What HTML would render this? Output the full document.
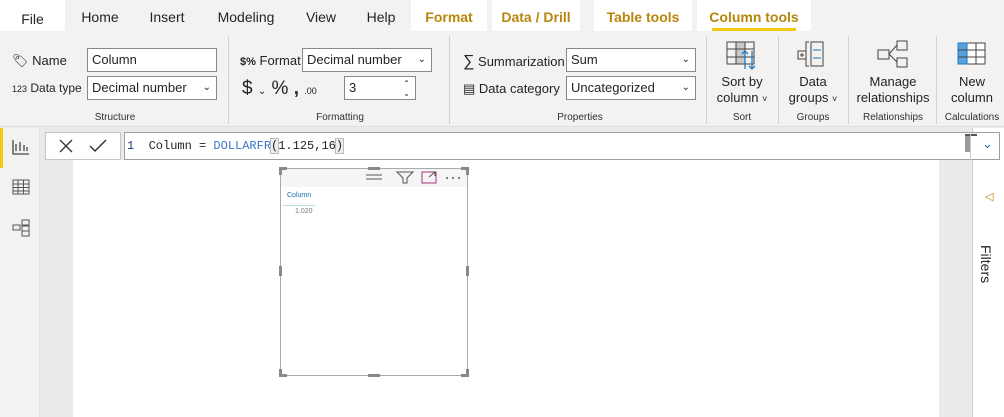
<!DOCTYPE html>
<html><head><style>
*{margin:0;padding:0;box-sizing:border-box}
body{width:1004px;height:417px;overflow:hidden;background:#eaeaea;font-family:"Liberation Sans",sans-serif;position:relative;color:#252423}
.a{position:absolute}
.tab{position:absolute;top:0;height:31px;font-size:14px;line-height:34px;text-align:center}
.lbl{font-size:13px;position:absolute}
.inp{position:absolute;background:#fff;border:1px solid #8a8886;height:24px;font-size:13px;line-height:22px;padding-left:4px}
.chev{position:absolute;right:5px;top:0;font-size:10px}
.grp{position:absolute;top:112px;font-size:10px;color:#323130;text-align:center}
.sep{position:absolute;top:36px;width:1px;height:88px;background:#d2d0ce}
.big{position:absolute;font-size:13px;text-align:center;line-height:16px}
</style></head><body>
<div class="a" style="left:0;top:0;width:1004px;height:31px;background:#f3f2f1"></div>
<div class="tab" style="left:0;width:65px;background:#fff;line-height:38px">File</div>
<div class="tab" style="left:80px;width:40px">Home</div>
<div class="tab" style="left:148px;width:38px">Insert</div>
<div class="tab" style="left:215px;width:62px">Modeling</div>
<div class="tab" style="left:305px;width:32px">View</div>
<div class="tab" style="left:366px;width:30px">Help</div>
<div class="tab" style="left:411px;width:76px;background:#fff;color:#b8860b;font-weight:bold">Format</div>
<div class="tab" style="left:492px;width:88px;background:#fff;color:#b8860b;font-weight:bold">Data / Drill</div>
<div class="tab" style="left:594px;width:98px;background:#fff;color:#b8860b;font-weight:bold">Table tools</div>
<div class="tab" style="left:697px;width:114px;background:#fff;color:#b8860b;font-weight:bold">Column tools</div>
<div class="a" style="left:712px;top:28px;width:84px;height:3px;background:#f2c811"></div>
<div class="a" style="left:0;top:31px;width:1004px;height:96px;background:#f3f2f1;border-bottom:1px solid #e1dfdd"></div>
<div class="lbl" style="left:12px;top:53px">🏷&nbsp;Name</div>
<div class="lbl" style="left:12px;top:81px;font-size:12px"><span style="font-size:9px">123</span> Data type</div>
<div class="inp" style="left:87px;top:48px;width:130px">Column</div>
<div class="inp" style="left:87px;top:76px;width:130px">Decimal number<span class="chev">⌄</span></div>
<div class="grp" style="left:80px;width:70px">Structure</div>
<div class="sep" style="left:228px"></div>
<div class="lbl" style="left:240px;top:53px"><b style="font-size:11px">$%</b> Format</div>
<div class="inp" style="left:302px;top:48px;width:130px">Decimal number<span class="chev">⌄</span></div>
<div class="lbl" style="left:242px;top:78px;font-size:19px">$ <span style="font-size:10px">⌄</span> % <b>,</b> <span style="font-size:9px">.00</span></div>
<div class="inp" style="left:344px;top:76px;width:72px">3<span class="chev" style="font-size:8px;line-height:10px;top:2px">⌃<br>⌄</span></div>
<div class="grp" style="left:300px;width:80px">Formatting</div>
<div class="sep" style="left:449px"></div>
<div class="lbl" style="left:463px;top:53px"><span style="font-size:16px">∑</span> Summarization</div>
<div class="lbl" style="left:463px;top:81px">▤ Data category</div>
<div class="inp" style="left:566px;top:48px;width:130px">Sum<span class="chev">⌄</span></div>
<div class="inp" style="left:566px;top:76px;width:130px">Uncategorized<span class="chev">⌄</span></div>
<div class="grp" style="left:550px;width:60px">Properties</div>
<div class="sep" style="left:706px"></div>
<svg class="a" style="left:726px;top:41px" width="34" height="30"><rect x="1" y="1" width="27" height="22" fill="none" stroke="#444"/><rect x="10" y="1" width="9" height="22" fill="#c8c8c8" stroke="#444"/><line x1="1" y1="8" x2="28" y2="8" stroke="#444"/><line x1="1" y1="16" x2="28" y2="16" stroke="#444"/><path d="M19 28V10M16 13l3-3 3 3M26 10v18M23 25l3 3 3-3" stroke="#1b7ac2" fill="none" stroke-width="1.3"/></svg>
<div class="big" style="left:714px;top:74px;width:56px">Sort by<br>column <span style="font-size:9px">˅</span></div>
<div class="grp" style="left:720px;width:44px">Sort</div>
<div class="sep" style="left:778px"></div>
<svg class="a" style="left:797px;top:41px" width="32" height="26"><rect x="1" y="10" width="8" height="8" fill="none" stroke="#444"/><path d="M5 12v4M3 14h4" stroke="#444"/><path d="M12 1h-3v24h3" fill="none" stroke="#444"/><rect x="14" y="1" width="12" height="24" fill="none" stroke="#444"/><path d="M16 9h8M16 17h8" stroke="#1b7ac2"/></svg>
<div class="big" style="left:785px;top:74px;width:56px">Data<br>groups <span style="font-size:9px">˅</span></div>
<div class="grp" style="left:785px;width:56px">Groups</div>
<div class="sep" style="left:848px"></div>
<svg class="a" style="left:877px;top:40px" width="32" height="28"><rect x="1" y="10" width="11" height="9" fill="none" stroke="#444"/><rect x="20" y="1" width="10" height="9" fill="none" stroke="#444"/><rect x="20" y="18" width="10" height="9" fill="none" stroke="#444"/><path d="M12 14l8-9M12 14l8 8" stroke="#444" fill="none"/></svg>
<div class="big" style="left:853px;top:74px;width:80px">Manage<br>relationships</div>
<div class="grp" style="left:855px;width:76px">Relationships</div>
<div class="sep" style="left:936px"></div>
<svg class="a" style="left:957px;top:42px" width="30" height="24"><rect x="1" y="1" width="27" height="21" fill="#fff" stroke="#444"/><rect x="1" y="1" width="9" height="21" fill="#5aa0dd" stroke="#1b7ac2"/><path d="M1 8h27M1 15h27M19 1v21" stroke="#444"/></svg>
<div class="big" style="left:945px;top:74px;width:54px">New<br>column</div>
<div class="grp" style="left:940px;width:64px">Calculations</div>
<div class="a" style="left:0;top:128px;width:40px;height:289px;background:#f3f2f1;border-right:1px solid #e1dfdd"></div>
<div class="a" style="left:0;top:128px;width:3px;height:40px;background:#f2c811"></div>
<svg class="a" style="left:12px;top:138px" width="18" height="18"><path d="M1 2v14h16M4 13V6M8 13V4M12 13V7M15 13V9" stroke="#444" fill="none" stroke-width="1.3"/></svg>
<svg class="a" style="left:12px;top:179px" width="18" height="16"><rect x="1" y="1" width="16" height="14" fill="none" stroke="#555"/><path d="M1 5h16M1 8.5h16M1 12h16M6 1v14M11.5 1v14" stroke="#555"/></svg>
<svg class="a" style="left:12px;top:219px" width="18" height="18"><rect x="1" y="6" width="7" height="5" fill="none" stroke="#555"/><rect x="10" y="1" width="7" height="5" fill="none" stroke="#555"/><rect x="10" y="7" width="7" height="5" fill="none" stroke="#555"/><rect x="10" y="12" width="7" height="5" fill="none" stroke="#555"/></svg>
<div class="a" style="left:73px;top:160px;width:866px;height:257px;background:#fff"></div>
<div class="a" style="left:972px;top:128px;width:32px;height:289px;background:#fff;border-left:1px solid #d2d0ce"></div>
<div class="a" style="left:985px;top:190px;font-size:11px;color:#c08000">◁</div>
<div class="a" style="left:978px;top:245px;font-size:14px;writing-mode:vertical-rl">Filters</div>
<div class="a" style="left:45px;top:132px;width:76px;height:28px;background:#fff;border:1px solid #c8c6c4"></div>
<svg class="a" style="left:58px;top:138px" width="60" height="16"><path d="M2 2l12 12M14 2L2 14" stroke="#333" stroke-width="1.3"/><path d="M32 8l5 5 11-11" stroke="#333" stroke-width="1.5" fill="none"/></svg>
<div class="a" style="left:124px;top:132px;width:876px;height:28px;background:#fff;border:1px solid #a19f9d;font-family:'Liberation Mono',monospace;font-size:12px;line-height:26px;padding-left:2px"><span style="color:#1e3c78">1</span>&nbsp; Column = <span style="color:#3a78c8">DOLLARFR</span><span style="background:#eee;outline:1px solid #bbb">(</span>1.125,16<span style="background:#eee;outline:1px solid #bbb">)</span></div>
<div class="a" style="left:965px;top:134px;width:5px;height:18px;background:#999"></div>
<div class="a" style="left:965px;top:134px;width:12px;height:2px;background:#555"></div>
<div class="a" style="left:970px;top:132px;width:1px;height:28px;background:#ccc"></div>
<div class="a" style="left:982px;top:136px;font-size:13px;color:#1b7ac2">⌄</div>
<div class="a" style="left:280px;top:168px;width:188px;height:208px;border:1px solid #aaa;background:#fff"></div>
<div class="a" style="left:281px;top:169px;width:186px;height:18px;background:#f5f5f5"></div>
<div class="a" style="left:279px;top:167px;width:8px;height:3px;background:#888"></div><div class="a" style="left:279px;top:167px;width:3px;height:8px;background:#888"></div>
<div class="a" style="left:461px;top:167px;width:8px;height:3px;background:#888"></div><div class="a" style="left:466px;top:167px;width:3px;height:8px;background:#888"></div>
<div class="a" style="left:279px;top:374px;width:8px;height:3px;background:#888"></div><div class="a" style="left:279px;top:369px;width:3px;height:8px;background:#888"></div>
<div class="a" style="left:461px;top:374px;width:8px;height:3px;background:#888"></div><div class="a" style="left:466px;top:369px;width:3px;height:8px;background:#888"></div>
<div class="a" style="left:368px;top:167px;width:12px;height:3px;background:#888"></div>
<div class="a" style="left:368px;top:374px;width:12px;height:3px;background:#888"></div>
<div class="a" style="left:279px;top:266px;width:3px;height:10px;background:#888"></div>
<div class="a" style="left:466px;top:266px;width:3px;height:10px;background:#888"></div>
<svg class="a" style="left:365px;top:170px" width="100" height="14"><path d="M1 5h16M1 9h16" stroke="#555"/><path d="M32 2h16l-6 6v5h-4V8z" fill="none" stroke="#555"/><rect x="57" y="2" width="14" height="11" fill="none" stroke="#a37"/><path d="M64 7l6-5M66 2h4v4" stroke="#555" fill="none"/><circle cx="82" cy="8" r="1" fill="#555"/><circle cx="88" cy="8" r="1" fill="#555"/><circle cx="94" cy="8" r="1" fill="#555"/></svg>
<div class="a" style="left:287px;top:192px;font-size:7px;color:#1b6ea8">Column</div>
<div class="a" style="left:283px;top:205px;width:32px;height:1px;background:#b8e0d8"></div>
<div class="a" style="left:295px;top:208px;font-size:7px;color:#777">1.020</div>
</body></html>
